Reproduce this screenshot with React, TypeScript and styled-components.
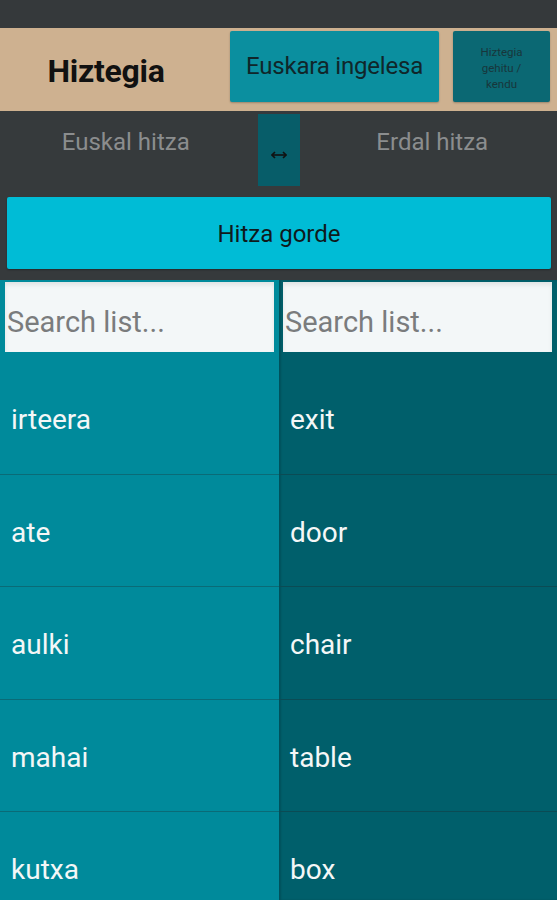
import React from "react";
import styled, { createGlobalStyle } from "styled-components";

const Global = createGlobalStyle`
  html, body { margin: 0; padding: 0; background: #363a3c; }
  body { font-family: Roboto, "Noto Sans", sans-serif; width: 557px; height: 900px; overflow: hidden; }
  * { box-sizing: border-box; }
`;

const Screen = styled.div`
  width: 557px;
  height: 900px;
  display: flex;
  flex-direction: column;
  background: #363a3c;
  overflow: hidden;
`;

const StatusBar = styled.div`
  height: 28px;
  flex: none;
  background: #35393b;
`;

const Header = styled.div`
  height: 83px;
  flex: none;
  background: #ceb190;
  display: flex;
  align-items: flex-start;
  padding-top: 3px;
  padding-right: 7px;
`;

const Title = styled.div`
  width: 212px;
  height: 71px;
  margin-top: 4px;
  display: flex;
  align-items: center;
  justify-content: center;
  font-weight: 700;
  font-size: 32px;
  letter-spacing: -0.3px;
  color: #111;
`;

const HeaderButton = styled.button<{ $wide?: boolean }>`
  height: 71px;
  border: none;
  border-radius: 2px;
  margin-left: ${(p) => (p.$wide ? "18px" : "14px")};
  width: ${(p) => (p.$wide ? "209px" : "97px")};
  background: ${(p) => (p.$wide ? "#0b8f9f" : "#0b6873")};
  color: ${(p) => (p.$wide ? "#10262a" : "#18363b")};
  font-family: Roboto, sans-serif;
  font-size: ${(p) => (p.$wide ? "24px" : "11.5px")};
  line-height: ${(p) => (p.$wide ? "1.2" : "16px")};
  letter-spacing: ${(p) => (p.$wide ? "-0.2px" : "0")};
  padding: ${(p) => (p.$wide ? "0 4px" : "2px 22px 0")};
  display: flex;
  align-items: center;
  justify-content: center;
  text-align: center;
  box-shadow: 0 1px 2px rgba(0, 0, 0, 0.25);
`;

const Controls = styled.div`
  height: 169px;
  flex: none;
  display: flex;
  flex-direction: column;
  padding-top: 3px;
`;

const InputRow = styled.div`
  display: grid;
  grid-template-columns: 1fr 42px 1fr;
  height: 72px;
`;

const HintLabel = styled.div<{ $right?: boolean }>`
  font-size: 24px;
  color: #8b8d8e;
  text-align: center;
  padding-top: 14px;
  padding-left: ${(p) => (p.$right ? "8px" : "0")};
  padding-right: ${(p) => (p.$right ? "0" : "6px")};
`;

const SwapButton = styled.button`
  background: #075d69;
  border: none;
  height: 72px;
  width: 42px;
  padding: 10px 0 0 0;
  display: flex;
  align-items: center;
  justify-content: center;
`;

const SaveButton = styled.button`
  margin: 11px 6px 0 7px;
  height: 72px;
  border: none;
  border-radius: 2px;
  background: #00bcd6;
  color: #0f1a1c;
  font-family: Roboto, sans-serif;
  font-size: 24px;
  padding-top: 3px;
  box-shadow: 0 1px 2px rgba(0, 0, 0, 0.3);
`;

const Lists = styled.div`
  flex: 1;
  display: grid;
  grid-template-columns: 279px 1fr;
  min-height: 0;
`;

const Column = styled.div<{ $dark?: boolean }>`
  background: ${(p) => (p.$dark ? "#005f6b" : "#008a9b")};
  display: flex;
  flex-direction: column;
  padding-top: 2px;
  overflow: hidden;
  ${(p) => (p.$dark ? "box-shadow: inset 2px 0 2px rgba(0,0,0,0.15);" : "")}
`;

const Search = styled.input<{ $dark?: boolean }>`
  height: 70px;
  flex: none;
  margin: ${(p) => (p.$dark ? "0 5px 10px 4px" : "0 5px 10px 5px")};
  border: none;
  outline: none;
  background: #f3f7f8;
  font-family: Roboto, sans-serif;
  font-size: 29px;
  color: #333;
  padding: 9px 2px 0 2px;
  box-shadow: inset 0 3px 4px rgba(0, 0, 0, 0.08);
  &::placeholder { color: #7a7c7d; }
`;

const Row = styled.div<{ $dark?: boolean }>`
  height: 112.5px;
  flex: none;
  display: flex;
  align-items: center;
  padding-left: 11px;
  padding-top: 4px;
  font-size: 28px;
  color: #f4f7f7;
  border-bottom: 1px solid ${(p) => (p.$dark ? "#0b4b54" : "#0a6b77")};
`;

const SwapIcon = () => (
  <svg width="16" height="8" viewBox="0 0 16 8" fill="none">
    <path d="M1 4h14" stroke="#111" strokeWidth="1.6" />
    <path d="M4 1L1 4l3 3" stroke="#111" strokeWidth="1.6" />
    <path d="M12 1l3 3-3 3" stroke="#111" strokeWidth="1.6" />
  </svg>
);

const basque = ["irteera", "ate", "aulki", "mahai", "kutxa"];
const english = ["exit", "door", "chair", "table", "box"];

export default function App() {
  return (
    <>
      <Global />
      <Screen>
        <StatusBar />
        <Header>
          <Title>Hiztegia</Title>
          <HeaderButton $wide>Euskara ingelesa</HeaderButton>
          <HeaderButton>Hiztegia gehitu / kendu</HeaderButton>
        </Header>
        <Controls>
          <InputRow>
            <HintLabel>Euskal hitza</HintLabel>
            <SwapButton>
              <SwapIcon />
            </SwapButton>
            <HintLabel $right>Erdal hitza</HintLabel>
          </InputRow>
          <SaveButton>Hitza gorde</SaveButton>
        </Controls>
        <Lists>
          <Column>
            <Search placeholder="Search list..." />
            {basque.map((w) => (
              <Row key={w}>{w}</Row>
            ))}
          </Column>
          <Column $dark>
            <Search $dark placeholder="Search list..." />
            {english.map((w) => (
              <Row $dark key={w}>{w}</Row>
            ))}
          </Column>
        </Lists>
      </Screen>
    </>
  );
}
